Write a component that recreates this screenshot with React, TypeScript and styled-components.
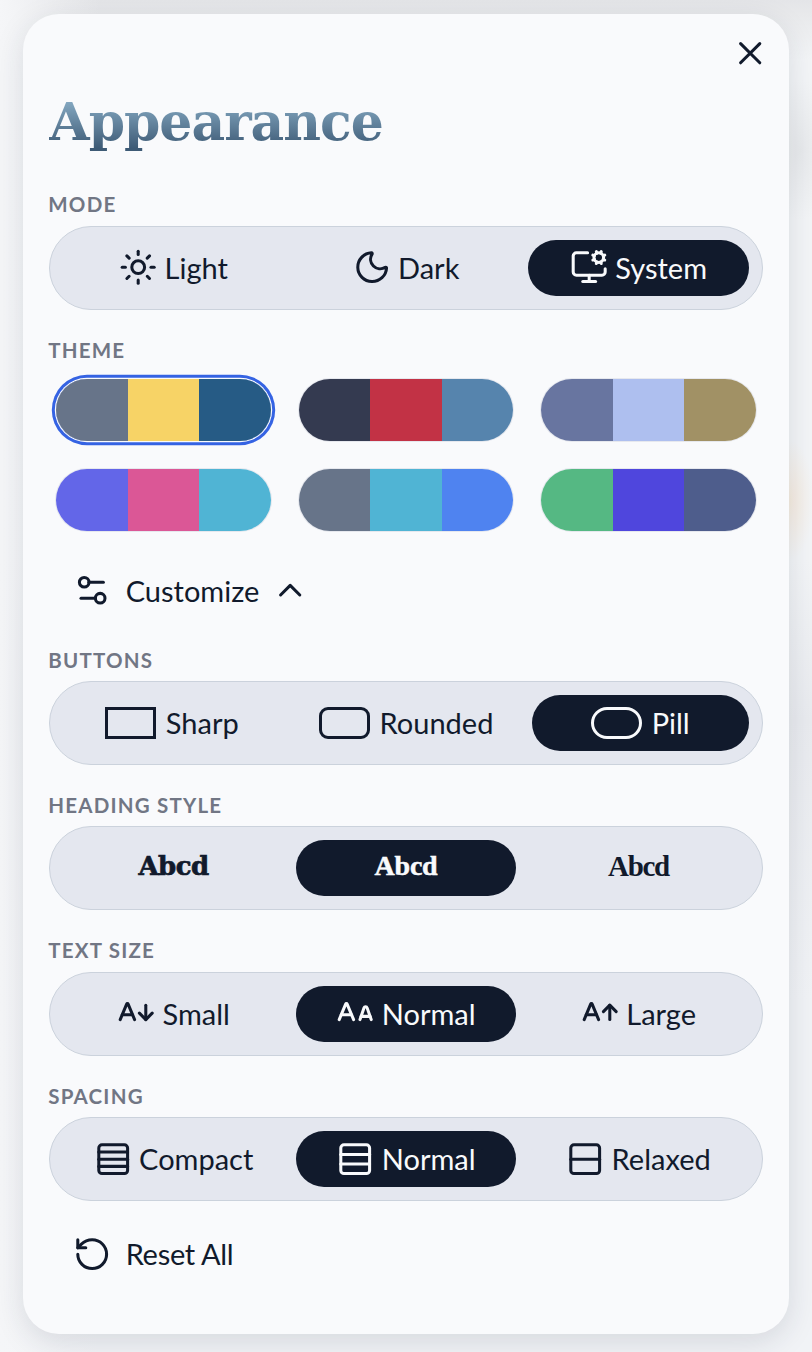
import { ReactNode } from 'react';
import styled, { createGlobalStyle } from 'styled-components';
import {
	AArrowDown,
	AArrowUp,
	ALargeSmall,
	ChevronUp,
	MonitorCog,
	Moon,
	RotateCcw,
	Rows2,
	Rows3,
	Rows4,
	Settings2,
	Sun,
	X,
} from 'lucide-react';

const INK = '#111a2c';

const GlobalStyle = createGlobalStyle`
	html, body {
		margin: 0;
		padding: 0;
	}
	body {
		font-family: "Lato", "Noto Sans", sans-serif;
		color: ${INK};
		background:
			linear-gradient(90deg, #f5f6f8 0, rgba(245,246,248,0) 100px),
			linear-gradient(180deg, #e4e5e8 0, #e8e9eb 14px, rgba(243,245,247,0) 60px),
			radial-gradient(40px 70px at 800px 150px, #e8eaec 0, rgba(232,234,236,0) 100%),
			radial-gradient(24px 60px at 790px 500px, #f6ece0 0, rgba(246,236,224,0) 100%),
			linear-gradient(180deg, #f3f5f7 0, #f3f5f7 560px, #e9ebef 720px, #f1f3f6 1000px),
			#f3f5f7;
	}
`;

const Page = styled.div`
	box-sizing: border-box;
	width: 812px;
	height: 1352px;
	padding: 14px 23.3px 18px;
	overflow: hidden;
`;

const Card = styled.div`
	position: relative;
	box-sizing: border-box;
	height: 1320px;
	padding: 72px 26px 0;
	background: #f9fafc;
	border-radius: 36px;
	box-shadow: 0 8px 30px rgb(30 40 60 / 0.13);
`;

const CloseButton = styled.button`
	position: absolute;
	top: 20px;
	right: 19px;
	display: flex;
	padding: 0;
	border: 0;
	background: none;
	color: ${INK};
`;

const Title = styled.h1`
	margin: 0;
	height: 71px;
	font-family: "DejaVu Serif", serif;
	font-size: 52px;
	line-height: 71px;
	font-weight: 700;
	letter-spacing: -1px;
	background: linear-gradient(180deg, #8fb3cc 12%, #3d5a75 88%);
	-webkit-background-clip: text;
	background-clip: text;
	color: transparent;
`;

const Section = styled.section`
	margin-top: 28px;
`;

const FirstSection = styled(Section)`
	margin-top: 35.4px;
`;

const AfterCustomize = styled(Section)`
	margin-top: 29px;
`;

const Label = styled.div`
	height: 24px;
	margin-bottom: 9.3px;
	margin-left: -1px;
	font-size: 20.5px;
	line-height: 24px;
	font-weight: 700;
	letter-spacing: 1.2px;
	color: #717684;
`;

const ThemeLabel = styled(Label)`
	margin-bottom: 17px;
`;

const Segments = styled.div<{ $columns?: string }>`
	box-sizing: border-box;
	display: grid;
	grid-template-columns: ${props => props.$columns || 'repeat(3, 1fr)'};
	gap: 12px;
	align-items: center;
	height: 84px;
	padding: 0 13px;
	background: #e4e7ef;
	border: 1px solid #cbd2dc;
	border-radius: 42px;
`;

const Segment = styled.button<{ $active?: boolean }>`
	display: flex;
	align-items: center;
	justify-content: center;
	gap: 7px;
	height: 56px;
	padding: 0;
	border: 0;
	border-radius: 28px;
	font-family: inherit;
	font-size: 29px;
	background: ${props => (props.$active ? INK : 'transparent')};
	color: ${props => (props.$active ? '#f9fafc' : INK)};
`;

const ShapeIcon = styled.span<{ $radius: number }>`
	box-sizing: border-box;
	display: block;
	width: 51px;
	height: 32px;
	margin-right: 3px;
	border: 3px solid currentColor;
	border-radius: ${props => props.$radius}px;
`;

const Sample = styled.span<{ $font: string; $size: number; $spacing: number; $stroke: number }>`
	margin-bottom: 4px;
	font-family: ${props => props.$font};
	font-size: ${props => props.$size}px;
	font-weight: 700;
	letter-spacing: ${props => props.$spacing}px;
	-webkit-text-stroke: ${props => props.$stroke}px currentColor;
`;

const ThemeGrid = styled.div`
	display: grid;
	grid-template-columns: repeat(3, 1fr);
	gap: 28px;
	padding: 0 7px;
`;

const Swatch = styled.button<{ $selected?: boolean }>`
	display: grid;
	grid-template-columns: repeat(3, 1fr);
	height: 62px;
	padding: 0;
	border: 0;
	border-radius: 31px;
	overflow: hidden;
	background: none;
	box-shadow: ${props =>
		props.$selected ? '0 0 0 1.2px #f9fafc, 0 0 0 4.2px #3563e3' : '0 0 0 1px #e6e8ee'};
`;

const SwatchColor = styled.span<{ $color: string }>`
	background: ${props => props.$color};
`;

const TextButton = styled.button`
	display: flex;
	align-items: center;
	gap: 14px;
	height: 56px;
	padding: 0 0 0 24px;
	border: 0;
	background: none;
	color: ${INK};
	font-family: inherit;
	font-size: 29px;
`;

const CustomizeButton = styled(TextButton)`
	margin-top: 32px;
`;

const ResetButton = styled(TextButton)`
	margin-top: 25px;
	letter-spacing: -0.3px;
`;

const Chevron = styled(ChevronUp)`
	margin-left: -2px;
`;

const themes = [
	['#677489', '#f7d366', '#265b85'],
	['#343a50', '#c23245', '#5684ad'],
	['#6875a0', '#aebfef', '#a19165'],
	['#6366e8', '#db5796', '#50b4d4'],
	['#677489', '#50b4d4', '#4f83f0'],
	['#55b883', '#4f46dd', '#4e5d8c'],
];

const ICON = 38.4;
const STROKE = 1.9;

type Option = { icon: ReactNode; text: string; active?: boolean };

const icon = (Glyph: typeof Sun) => <Glyph size={ICON} strokeWidth={STROKE} />;

const modes: Option[] = [
	{ icon: icon(Sun), text: 'Light' },
	{ icon: icon(Moon), text: 'Dark' },
	{ icon: icon(MonitorCog), text: 'System', active: true },
];

const buttonShapes: Option[] = [
	{ icon: <ShapeIcon $radius={0} />, text: 'Sharp' },
	{ icon: <ShapeIcon $radius={9} />, text: 'Rounded' },
	{ icon: <ShapeIcon $radius={16} />, text: 'Pill', active: true },
];

const textSizes: Option[] = [
	{ icon: icon(AArrowDown), text: 'Small' },
	{ icon: icon(ALargeSmall), text: 'Normal', active: true },
	{ icon: icon(AArrowUp), text: 'Large' },
];

const spacings: Option[] = [
	{ icon: icon(Rows4), text: 'Compact' },
	{ icon: icon(Rows3), text: 'Normal', active: true },
	{ icon: icon(Rows2), text: 'Relaxed' },
];

const OptionRow = ({ options, columns }: { options: Option[]; columns?: string }) => (
	<Segments $columns={columns}>
		{options.map(option => (
			<Segment key={option.text} $active={option.active}>
				{option.icon}
				{option.text}
			</Segment>
		))}
	</Segments>
);

const App = () => {
	return (
		<Page>
			<GlobalStyle />
			<Card>
				<CloseButton>
					<X size={ICON} strokeWidth={STROKE} />
				</CloseButton>
				<Title>Appearance</Title>

				<FirstSection>
					<Label>MODE</Label>
					<OptionRow options={modes} />
				</FirstSection>

				<Section>
					<ThemeLabel>THEME</ThemeLabel>
					<ThemeGrid>
						{themes.map((colors, index) => (
							<Swatch key={index} $selected={index === 0}>
								{colors.map(color => (
									<SwatchColor key={color} $color={color} />
								))}
							</Swatch>
						))}
					</ThemeGrid>
				</Section>

				<CustomizeButton>
					<Settings2 size={ICON} strokeWidth={STROKE} />
					Customize
					<Chevron size={ICON} strokeWidth={STROKE} />
				</CustomizeButton>

				<AfterCustomize>
					<Label>BUTTONS</Label>
					<OptionRow options={buttonShapes} columns="217px 1fr 217px" />
				</AfterCustomize>

				<Section>
					<Label>HEADING STYLE</Label>
					<Segments>
						<Segment>
							<Sample $font='"DejaVu Serif", serif' $size={26} $spacing={-0.6} $stroke={0.7}>Abcd</Sample>
						</Segment>
						<Segment $active>
							<Sample $font='"Liberation Serif", serif' $size={28} $spacing={-0.2} $stroke={0.5}>Abcd</Sample>
						</Segment>
						<Segment>
							<Sample $font='"Liberation Serif", serif' $size={29} $spacing={-1.3} $stroke={0}>Abcd</Sample>
						</Segment>
					</Segments>
				</Section>

				<Section>
					<Label>TEXT SIZE</Label>
					<OptionRow options={textSizes} />
				</Section>

				<Section>
					<Label>SPACING</Label>
					<OptionRow options={spacings} />
				</Section>

				<ResetButton>
					<RotateCcw size={ICON} strokeWidth={STROKE} />
					Reset All
				</ResetButton>
			</Card>
		</Page>
	);
};

export default App;
